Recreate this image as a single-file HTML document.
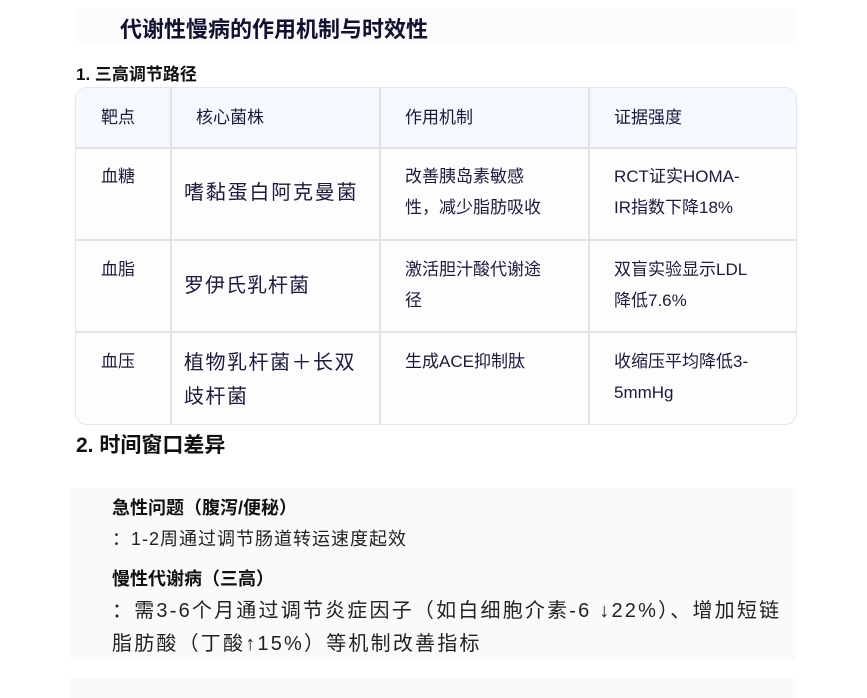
<!DOCTYPE html>
<html><head><meta charset="utf-8"><style>
body{margin:0;width:867px;height:696px;background:#fff;font-family:"Liberation Sans","Noto Sans CJK SC",sans-serif;color:#1a1a33;position:relative;overflow:hidden}
.a{position:absolute;white-space:nowrap}
.tb{position:absolute;left:75px;top:87px;width:720px;height:336px;border:1px solid #e3e6ec;border-radius:12px;overflow:hidden;background:#fdfdfe}
.tb .h{position:absolute;left:0;top:0;width:100%;height:59px;background:#f5f8ff;border-bottom:2px solid #e3e3e6}
.v{position:absolute;top:0;height:100%;width:2px;background:#e3e3e6}
.r{position:absolute;left:0;width:100%;height:2px;background:#e3e3e6}
.c{position:absolute;font-size:17px;line-height:31px;color:#1a1a40;white-space:nowrap}
</style></head><body>
<div class="a" style="left:75px;top:8px;width:721px;height:36px;background:#fcfcfd"></div>
<div class="a" style="left:120px;top:12px;font-size:22px;font-weight:bold;color:#111133">代谢性慢病的作用机制与时效性</div>
<div class="a" style="left:76px;top:60px;font-size:17px;font-weight:bold;color:#111">1. 三高调节路径</div>
<div class="tb">
<div class="h"></div>
<div class="v" style="left:94px"></div><div class="v" style="left:303px"></div><div class="v" style="left:512px"></div>
<div class="r" style="top:151px"></div><div class="r" style="top:243px"></div>
<div class="c" style="left:25px;top:14px">靶点</div>
<div class="c" style="left:120px;top:14px">核心菌株</div>
<div class="c" style="left:329px;top:14px">作用机制</div>
<div class="c" style="left:538px;top:14px">证据强度</div>
<div class="c" style="left:25px;top:73px">血糖</div>
<div class="c" style="left:108px;top:90px;font-size:20px;letter-spacing:1.8px">嗜黏蛋白阿克曼菌</div>
<div class="c" style="left:329px;top:73px">改善胰岛素敏感<br>性，减少脂肪吸收</div>
<div class="c" style="left:538px;top:73px">RCT证实HOMA-<br>IR指数下降18%</div>
<div class="c" style="left:25px;top:166px">血脂</div>
<div class="c" style="left:108px;top:183px;font-size:20px;letter-spacing:1px">罗伊氏乳杆菌</div>
<div class="c" style="left:329px;top:166px">激活胆汁酸代谢途<br>径</div>
<div class="c" style="left:538px;top:166px">双盲实验显示LDL<br>降低7.6%</div>
<div class="c" style="left:25px;top:258px">血压</div>
<div class="c" style="left:108px;top:258px;font-size:20px;line-height:34px;letter-spacing:1.5px">植物乳杆菌＋长双<br>歧杆菌</div>
<div class="c" style="left:329px;top:258px">生成ACE抑制肽</div>
<div class="c" style="left:538px;top:258px">收缩压平均降低3-<br>5mmHg</div>
</div>
<div class="a" style="left:76px;top:429px;font-size:21px;font-weight:bold;color:#111">2. 时间窗口差异</div>
<div class="a" style="left:70px;top:488px;width:726px;height:172px;background:#fafafb"></div>
<div class="a" style="left:70px;top:678px;width:726px;height:20px;background:#fafafb"></div>
<div class="a" style="left:112px;top:494px;font-size:18px;font-weight:bold;color:#111">急性问题（腹泻/便秘）</div>
<div class="a" style="left:112px;top:525px;font-size:18px;letter-spacing:1px;color:#222">：1-2周通过调节肠道转运速度起效</div>
<div class="a" style="left:112px;top:565px;font-size:18px;font-weight:bold;color:#111">慢性代谢病（三高）</div>
<div class="a" style="left:112px;top:595px;font-size:20px;line-height:33px;letter-spacing:2.2px;color:#222">：需3-6个月通过调节炎症因子（如白细胞介素-6 ↓22%）、增加短链<br>脂肪酸（丁酸↑15%）等机制改善指标</div>
</body></html>
